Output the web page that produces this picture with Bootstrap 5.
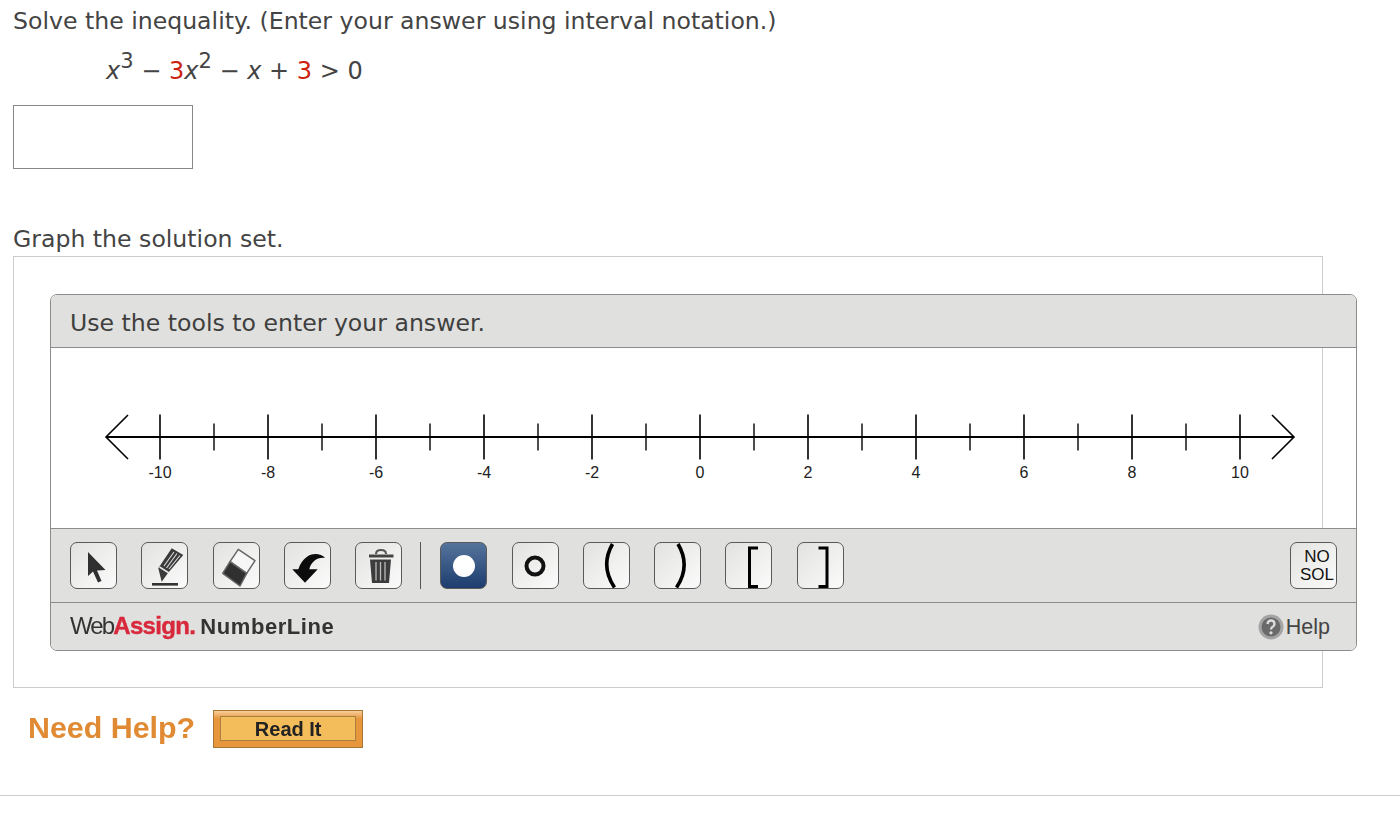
<!DOCTYPE html>
<html lang="en">
<head>
<meta charset="utf-8">
<title>Solve the inequality</title>
<link rel="stylesheet" href="https://cdn.jsdelivr.net/npm/bootstrap@5.3.0/dist/css/bootstrap.min.css">
<style>
body{background:#fff;color:#444;font-family:"DejaVu Sans",Verdana,sans-serif;font-size:23.6px;line-height:32px;margin:0;height:838px;overflow:hidden}
.q-wrap{padding:5px 13px 0 13px}
.q-line{height:32px;margin:0}
.q-math{margin:18px 0 0 93px;height:32px;white-space:pre;font-size:24px}
.q-math i{font-style:italic}
.q-math sup{font-size:21px;top:-11px;line-height:0;vertical-align:baseline;position:relative}
.q-red{color:#cc2211}
.ans-box{width:180px;height:64px;border:1px solid #888;margin-top:18px;background:#fff;display:block;border-radius:0;padding:0}
.q-graph{margin-top:54px}
.outer-box{width:1310px;height:432px;border:1px solid #ccc;margin-top:1px;padding:37px 0 0 36px}
.nl-panel{width:1307px;height:357px;border:1px solid #8c8c8c;border-radius:7px;overflow:hidden}
.nl-head{height:53px;background:#e0e0de;border-bottom:1px solid #8c8c8c;padding-left:19px;line-height:56px;color:#3f3f3f}
.nl-canvas{height:180px}
.nl-canvas svg{display:block}
.nl-canvas text{font-family:"Liberation Sans",Arial,sans-serif;font-size:16px;fill:#222;text-anchor:middle}
.nl-tools{height:75px;background:#e0e0de;border-top:1px solid #8c8c8c;border-bottom:1px solid #8c8c8c;padding:13px 19px 0 19px}
.tool-btn{width:47px;height:47px;border:1px solid #5a5a5a;border-radius:7px;background:linear-gradient(135deg,#e2e2e0,#fbfbfb);padding:0;margin-right:24.25px;flex:none;display:flex;align-items:center;justify-content:center}
.tool-btn svg{display:block;filter:blur(.35px)}
.tool-on{background:linear-gradient(180deg,#55749c,#1c3d6e)}
.tool-sep{width:1px;height:47px;background:#555;margin:0 19px 0 -6px;flex:none}
.tool-no{margin:0 0 0 auto;font-family:"Liberation Sans",Arial,sans-serif;font-size:17px;line-height:18px;color:#111;text-align:center;padding:0 0 0 7px;display:block}
.nl-foot{height:47px;background:#e0e0de;padding:0 26px 0 19px}
.brand{font-family:"Liberation Sans",Arial,sans-serif;font-size:24px;line-height:46px;white-space:nowrap;filter:blur(.3px)}
.brand-web{letter-spacing:-1.9px;color:#333}
.brand-as{font-weight:700;color:#d8293c;letter-spacing:-.65px;-webkit-text-stroke:.4px #d8293c}
.brand-nl{font-weight:700;font-size:22px;color:#333;letter-spacing:.55px;margin-left:5px}
.help-lnk{font-family:"Liberation Sans",Arial,sans-serif;font-size:21.5px;color:#444;line-height:46px;gap:2px}
.need-row{margin:21px 0 0 15px}
.need-t{font-family:"Liberation Sans",Arial,sans-serif;font-weight:700;font-size:30.4px;color:#e08a34;line-height:38px;margin:-1px 18px 0 0;filter:blur(.4px)}
.read-btn{width:150px;height:38px;border:1px solid #a87535;background:linear-gradient(180deg,#f6cf9a 0,#e8963c 22%,#e8963c 100%);padding:5px 6px 6px 6px;border-radius:0;display:block;margin-top:1px}
.read-in{display:block;height:100%;border:1px solid #a98040;background:#f3bd5b;font-family:"Liberation Sans",Arial,sans-serif;font-weight:700;font-size:20px;line-height:24px;color:#222;text-align:center;filter:blur(.25px)}
.foot-rule{border-top:1px solid #ccc;margin:47px 0 0 0;opacity:1}
</style>
</head>
<body>
<div class="q-wrap">
  <p class="q-line">Solve the inequality. (Enter your answer using interval notation.)</p>
  <div class="q-math"><i>x</i><sup>3</sup> − <span class="q-red">3</span><i>x</i><sup>2</sup> − <i>x</i> + <span class="q-red">3</span> &gt; 0</div>
  <input class="ans-box" type="text" aria-label="answer">
  <p class="q-line q-graph">Graph the solution set.</p>
  <div class="outer-box">
    <div class="nl-panel">
      <div class="nl-head">Use the tools to enter your answer.</div>
      <div class="nl-canvas">
        <svg width="1305" height="180" viewBox="51 348 1305 180" id="nl"></svg>
      </div>
      <div class="nl-tools d-flex align-items-start">
        <button class="tool-btn" aria-label="select"><svg width="45" height="45" viewBox="71 543 45 45"><path d="M88 552 L88 576 L93 571.500 L98 582.500 L101.500 581 L97 570.500 L105.500 570 Z" fill="#2f2f2f"/></svg></button>
        <button class="tool-btn" aria-label="draw"><svg width="45" height="45" viewBox="142 543 45 45"><path d="M171.700 548.300 L183.300 555 L168 573 L161.700 581.700 L158.300 568.300 Z" fill="#3a3a3a"/><path d="M174 552 L164 566 M177 553.500 L166.500 568 M180 555.500 L169 569" stroke="#ddd" stroke-width="1.100"/><path d="M159.500 567 L169 573" stroke="#e4e4e4" stroke-width="1.500"/><rect x="152" y="583" width="26" height="2.600" fill="#333"/></svg></button>
        <button class="tool-btn" aria-label="erase"><svg width="45" height="45" viewBox="214 543 45 45"><path d="M238.300 549.300 L255 560.700 L246.700 573.300 L230 561.700 Z" fill="#f6f6f6" stroke="#666" stroke-width="1.500" stroke-linejoin="round"/><path d="M230 561.700 L246.700 573.300 L240 586 L222.700 573.300 Z" fill="#303030" stroke="#666" stroke-width="1.500" stroke-linejoin="round"/></svg></button>
        <button class="tool-btn" aria-label="undo"><svg width="45" height="45" viewBox="285 543 45 45"><path d="M325.300 558 C319 552 305 551 298.300 569.300 L292.300 569.300 L305 582.700 L317.700 569.300 L309.300 569.300 C311 562 317 557 325.300 558 Z" fill="#0c0c0c"/></svg></button>
        <button class="tool-btn" aria-label="delete"><svg width="45" height="45" viewBox="356 543 45 45"><path d="M369 556 L393.500 556" stroke="#444" stroke-width="3"/><path d="M376 554 Q376 550 381 550 Q386 550 386 554" fill="none" stroke="#555" stroke-width="2"/><path d="M370 559.500 H391 L389 583 H372 Z" fill="#3c3c3c"/><path d="M376 562 V580.500 M380.500 562 V580.500 M385 562 V580.500" stroke="#bbb" stroke-width="1.300"/></svg></button>
        <span class="tool-sep"></span>
        <button class="tool-btn tool-on" aria-label="closed point"><svg width="26" height="26" viewBox="0 0 26 26"><circle cx="13" cy="13" r="11" fill="#fff"/></svg></button>
        <button class="tool-btn" aria-label="open point"><svg width="26" height="26" viewBox="0 0 26 26"><circle cx="13" cy="13" r="8.500" fill="none" stroke="#111" stroke-width="4"/></svg></button>
        <button class="tool-btn" aria-label="left parenthesis"><svg width="45" height="45" viewBox="584 543 45 45"><path d="M612.500 544 Q600 566 614.500 587.500" fill="none" stroke="#000" stroke-width="3.600"/></svg></button>
        <button class="tool-btn" aria-label="right parenthesis"><svg width="45" height="45" viewBox="655 543 45 45"><path d="M678 544 Q691 566 676.500 587.500" fill="none" stroke="#000" stroke-width="3.600"/></svg></button>
        <button class="tool-btn" aria-label="left bracket"><svg width="45" height="45" viewBox="726 543 45 45"><path d="M758 548 H749.500 V586.500 H758" fill="none" stroke="#000" stroke-width="3"/></svg></button>
        <button class="tool-btn" aria-label="right bracket"><svg width="45" height="45" viewBox="798 543 45 45"><path d="M818.500 548 H827 V586.500 H818.500" fill="none" stroke="#000" stroke-width="3"/></svg></button>
        <button class="tool-btn tool-no">NO<br>SOL</button>
      </div>
      <div class="nl-foot d-flex align-items-center justify-content-between">
        <div class="brand"><span class="brand-web">Web</span><span class="brand-as">Assign.</span><span class="brand-nl">NumberLine</span></div>
        <div class="help-lnk d-flex align-items-center"><svg width="26" height="26" viewBox="0 0 26 26"><circle cx="13" cy="13" r="12.500" fill="#a4a4a4"/><circle cx="13" cy="13" r="9.500" fill="#6a6a6a"/><path d="M9.500 10 Q10 6.500 13 6.500 Q16.500 6.500 16.500 10 Q16.500 12 14.500 13 Q13 13.800 13 15.500" fill="none" stroke="#dcdcdc" stroke-width="2.400"/><circle cx="13" cy="18.800" r="1.600" fill="#dcdcdc"/></svg><span>Help</span></div>
      </div>
    </div>
  </div>
  <div class="need-row d-flex align-items-start">
    <span class="need-t">Need Help?</span>
    <a class="read-btn text-decoration-none" href="#"><span class="read-in">Read It</span></a>
  </div>
</div>
<hr class="foot-rule">
<script src="https://cdn.jsdelivr.net/npm/bootstrap@5.3.0/dist/js/bootstrap.bundle.min.js"></script>
<script>
var s='<path d="M106 437H1294" stroke="#000" stroke-width="2"/><path d="M128 415L106 437L128 459M1272 415L1294 437L1272 459" fill="none" stroke="#000" stroke-width="1.6"/>';
for(var v=-10;v<=10;v++){var x=700+v*54;
 if(v%2===0){s+='<path d="M'+x+' 414.5V459.5" stroke="#000" stroke-width="1.6"/><text x="'+x+'" y="478">'+v+'</text>';}
 else{s+='<path d="M'+x+' 423.5V450.5" stroke="#000" stroke-width="1.4"/>';}
}
document.getElementById('nl').innerHTML=s;
</script>
</body>
</html>
